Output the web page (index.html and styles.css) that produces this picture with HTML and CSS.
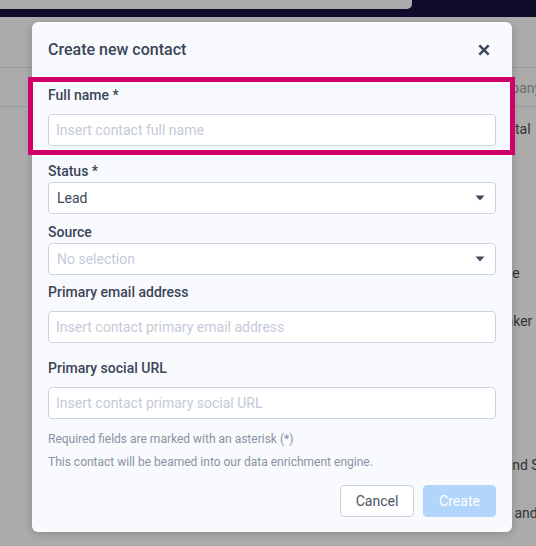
FILE: index.html
```html
<!DOCTYPE html>
<html lang="en">
<head>
<meta charset="utf-8">
<title>Create new contact</title>
<link rel="stylesheet" href="styles.css">
</head>
<body>
<div class="app">
  <div class="topbar"><div class="topbar-panel"></div></div>
  <div class="table">
    <div class="table-spacer"></div>
    <div class="row row--head"><span class="cell">Company</span></div>
    <div class="row"><span class="cell cell--capital">Capital</span></div>
    <div class="row"></div>
    <div class="row"></div>
    <div class="row"><span class="cell cell--phone">Phone</span></div>
    <div class="row"><span class="cell">Speaker</span></div>
    <div class="row"></div>
    <div class="row"></div>
    <div class="row"><span class="cell">Legend Studio</span></div>
    <div class="row"><span class="cell cell--sales">Sales and Ops</span></div>
  </div>
</div>

<div class="modal" role="dialog" aria-labelledby="modal-title">
  <div class="modal-header">
    <h2 class="modal-title" id="modal-title">Create new contact</h2>
    <button class="close" type="button" aria-label="Close">
      <svg width="12" height="12" viewBox="0 0 12 12"><path d="M1.3 1.3L10.7 10.7M10.7 1.3L1.3 10.7" stroke="#3e4a5f" stroke-width="2.6" fill="none"/></svg>
    </button>
  </div>
  <form class="modal-body">
    <div class="field field--text">
      <label class="label">Full name *</label>
      <input class="input" type="text" placeholder="Insert contact full name">
    </div>
    <div class="field field--select">
      <label class="label">Status *</label>
      <div class="select"><span class="select-value">Lead</span><svg class="caret" width="10" height="6" viewBox="0 0 10 6"><path d="M0.5 0.5H9.5L5 5.5Z" fill="#3e4a5f"/></svg></div>
    </div>
    <div class="field field--select field--compact">
      <label class="label">Source</label>
      <div class="select"><span class="select-value select-value--empty">No selection</span><svg class="caret" width="10" height="6" viewBox="0 0 10 6"><path d="M0.5 0.5H9.5L5 5.5Z" fill="#3e4a5f"/></svg></div>
    </div>
    <div class="field field--text">
      <label class="label">Primary email address</label>
      <input class="input" type="text" placeholder="Insert contact primary email address">
    </div>
    <div class="field field--text field--last">
      <label class="label">Primary social URL</label>
      <input class="input" type="text" placeholder="Insert contact primary social URL">
    </div>
    <p class="hint">Required fields are marked with an asterisk (*)</p>
    <p class="hint hint--second">This contact will be beamed into our data enrichment engine.</p>
    <div class="actions">
      <button class="btn btn--secondary" type="button">Cancel</button>
      <button class="btn btn--primary" type="button">Create</button>
    </div>
  </form>
</div>

<div class="highlight"></div>
</body>
</html>
```
FILE: styles.css
```css
* { box-sizing: border-box; }

html, body {
  margin: 0;
  padding: 0;
  overflow: hidden;
}

body {
  width: 536px;
  height: 546px;
  background: #ababab;
  font-family: Roboto, "Liberation Sans", sans-serif;
  color: #3b4558;
}

.app {
  width: 536px;
  height: 546px;
}

.topbar {
  height: 17px;
  background: #0e0b2b;
}

.topbar-panel {
  width: 412px;
  height: 9px;
  background: #ababab;
  border-bottom-right-radius: 5px;
}

.table-spacer {
  height: 50px;
}

.row {
  height: 48px;
  line-height: 44px;
  font-size: 14px;
  color: #333334;
  white-space: nowrap;
}

.row--head {
  height: 40px;
  line-height: 40px;
  border-top: 1px solid #999a9b;
  border-bottom: 1px solid #999a9b;
  color: #6d6d6e;
}

.cell {
  display: block;
  padding-left: 482px;
}

.cell--capital { padding-left: 487px; }
.cell--phone { padding-left: 480px; }
.cell--sales { padding-left: 477px; }

/* Modal */
.modal {
  position: absolute;
  left: 32px;
  top: 22px;
  width: 480px;
  height: 510px;
  background: #f8fafd;
  border-radius: 6px;
  box-shadow: 0 2px 8px rgba(0, 0, 0, 0.18);
}

.modal-header {
  display: flex;
  align-items: center;
  justify-content: space-between;
  padding: 16px 16px 23px;
}

.modal-title {
  margin: 0;
  font-size: 16px;
  line-height: 22px;
  font-weight: 500;
  color: #3b4558;
}

.close {
  display: flex;
  align-items: center;
  justify-content: center;
  width: 24px;
  height: 24px;
  padding: 0;
  border: 0;
  background: transparent;
}

.modal-body {
  margin: 0;
  padding: 0 16px;
}

.field--text { margin-bottom: 15px; }
.field--select { margin-bottom: 8px; }
.field--compact { margin-bottom: 7px; }
.field--last { margin-bottom: 12px; }

.label {
  display: block;
  font-size: 14px;
  line-height: 20px;
  font-weight: 500;
  color: #3b4558;
}

.field--text .label { margin-bottom: 9px; }
.field--select .label { margin-bottom: 1px; }

.input,
.select {
  display: block;
  width: 100%;
  height: 32px;
  border: 1px solid #cbd3df;
  border-radius: 4px;
  background: #ffffff;
  font-family: Roboto, "Liberation Sans", sans-serif;
  font-size: 14px;
  color: #3b4558;
}

.input {
  padding: 0 7px;
  outline: none;
}

.input::placeholder {
  color: #c4cbd7;
}

.select {
  display: flex;
  align-items: center;
  justify-content: space-between;
  padding: 0 10px 0 8px;
}

.select-value--empty {
  color: #c4cbd7;
}

.caret {
  display: block;
}

.hint {
  margin: 0;
  font-size: 12px;
  line-height: 16px;
  color: #8a93a3;
}

.hint--second {
  margin-top: 7px;
}

.actions {
  display: flex;
  justify-content: flex-end;
  gap: 9px;
  margin-top: 15px;
}

.btn {
  height: 32px;
  border-radius: 4px;
  font-family: Roboto, "Liberation Sans", sans-serif;
  font-size: 14px;
  padding: 0;
}

.btn--secondary {
  width: 74px;
  background: #ffffff;
  border: 1px solid #cbd3df;
  color: #4a5466;
}

.btn--primary {
  width: 73px;
  background: #b1d5fb;
  border: 1px solid #b1d5fb;
  color: #ffffff;
}

.highlight {
  position: absolute;
  left: 28px;
  top: 77px;
  width: 487px;
  height: 78px;
  border: 5px solid #cf0066;
}
```
